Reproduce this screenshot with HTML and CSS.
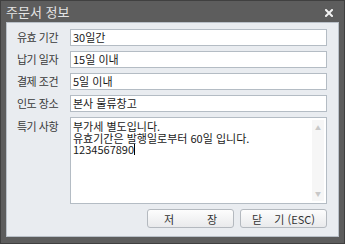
FILE: index.html
```html
<!DOCTYPE html>
<html lang="ko">
<head>
    <meta charset="UTF-8">
    <title>주문서 정보</title>
    <link rel="stylesheet" href="styles.css">
</head>
<body>
    <div class="window">
        <!-- Title bar -->
        <div class="title-bar">
            <span class="title">주문서 정보</span>
            <svg class="close" width="8" height="8" viewBox="0 0 8 8">
                <path d="M1 1 L7 7 M7 1 L1 7" stroke="#f2f2f2" stroke-width="2" stroke-linecap="square"/>
            </svg>
        </div>

        <div class="panel">
            <div class="form">
                <label>유효 기간</label>
                <div class="field">30일간</div>

                <label>납기 일자</label>
                <div class="field">15일 이내</div>

                <label>결제 조건</label>
                <div class="field">5일 이내</div>

                <label>인도 장소</label>
                <div class="field">본사 물류창고</div>

                <label class="top">특기 사항</label>
                <div class="memo">
                    <div class="memo-text">부가세 별도입니다.<br>유효기간은 발행일로부터 60일 입니다.<br>1234567890<span class="caret"></span></div>
                    <div class="scroll">
                        <span>&#9650;</span>
                        <span>&#9660;</span>
                    </div>
                </div>
            </div>

            <div class="buttons">
                <button>저&emsp;&emsp;&emsp;장</button>
                <button>닫&nbsp;&nbsp;&nbsp;&nbsp;기 (ESC)</button>
            </div>
        </div>
    </div>
</body>
</html>
```

FILE: styles.css
```css
body {
    margin: 0;
    font-family: "Noto Sans CJK KR", "Noto Sans", sans-serif;
    font-size: 11px;
    background-color: #3e3e3e;
}

.window {
    width: 345px;
    height: 244px;
    box-sizing: border-box;
    border: 1px solid #404040;
    background-color: #5d5d5d;
    padding: 0 5px 8px 5px;
}

.title-bar {
    height: 21px;
    display: flex;
    align-items: center;
    justify-content: space-between;
    padding: 0 6px 0 0;
    color: #e4e4e4;
    font-size: 13px;
}

.close {
    margin-top: 2px;
}

.panel {
    border: 1px solid #b9c0c8;
    background-color: #e9ecf0;
    padding: 6px 11px 8px 10px;
}

.form {
    display: grid;
    grid-template-columns: 53px 1fr;
    row-gap: 5px;
}

label {
    color: #3a3a3a;
    align-self: center;
    line-height: 17px;
    letter-spacing: -0.5px;
}

label.top {
    align-self: start;
    padding-top: 1px;
}

.field {
    height: 17px;
    box-sizing: border-box;
    border: 1px solid #b4bcc4;
    background-color: #fff;
    padding-left: 2px;
    line-height: 15px;
    color: #1a1a1a;
}

.memo {
    height: 87px;
    box-sizing: border-box;
    border: 1px solid #b4bcc4;
    background-color: #fff;
    display: flex;
}

.memo-text {
    flex: 1;
    padding: 3px 2px;
    line-height: 11.5px;
    color: #1a1a1a;
}

.caret {
    display: inline-block;
    width: 1px;
    height: 11px;
    background-color: #000;
    vertical-align: -1px;
}

.scroll {
    width: 12px;
    margin: 2px 2px 2px 0;
    background-color: #f6f6f6;
    display: flex;
    flex-direction: column;
    justify-content: space-between;
    align-items: center;
    color: #c8c8c8;
    font-size: 6px;
    padding: 3px 0;
}

.buttons {
    display: flex;
    justify-content: flex-end;
    gap: 6px;
    margin-top: 5px;
}

button {
    width: 87px;
    height: 19px;
    padding: 0;
    border: 1px solid #b4b9bf;
    border-radius: 3px;
    background: linear-gradient(#fdfdfd, #e9eaec);
    font-family: "Noto Sans CJK KR", "Noto Sans", sans-serif;
    font-size: 11px;
    color: #333;
}
```
